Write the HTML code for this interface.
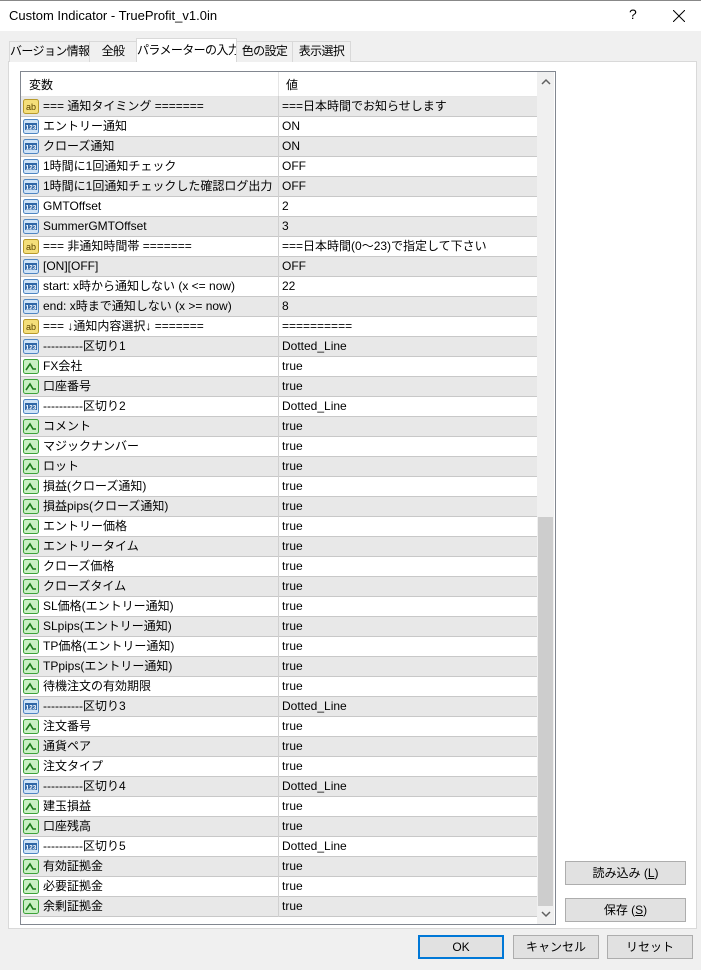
<!DOCTYPE html><html><head><meta charset="utf-8"><style>
*{margin:0;padding:0;box-sizing:border-box}
body{width:701px;height:970px;background:#f0f0f0;font-family:"Liberation Sans","Noto Sans CJK JP",sans-serif;font-size:12px;color:#000;position:relative;overflow:hidden}
.a{position:absolute}
#title{left:0;top:0;width:701px;height:31px;background:#fff;border-top:1px solid #888}
.tab{top:41px;height:21px;border:1px solid #d9d9d9;border-bottom:none;background:#f0f0f0;line-height:19px;text-align:center;font-size:12px;white-space:nowrap;letter-spacing:-0.6px;overflow:hidden}
#panel{left:8px;top:61px;width:689px;height:868px;background:#fff;border:1px solid #d9d9d9}
#list{left:20px;top:71px;width:536px;height:854px;border:1px solid #828790;background:#fff;overflow:hidden}
.row{position:absolute;left:0;width:516px;height:20px;border-bottom:1px solid #c8c8c8;line-height:19px}
.row.g{background:#e8e8e8}
.n{position:absolute;left:22px;top:0;white-space:nowrap}
.v{position:absolute;left:261px;top:0;white-space:nowrap}
.ic{position:absolute;left:2px;top:2px}
.btn{height:24px;border:1px solid #adadad;background:#e1e1e1;text-align:center;line-height:22px}
</style></head><body>
<div id="title" class="a"><span class="a" style="left:9px;top:7px;font-size:13px">Custom Indicator - TrueProfit_v1.0in</span>
<span class="a" style="left:629px;top:5px;font-size:14px">?</span>
<svg class="a" style="left:673px;top:9px" width="12" height="12"><path d="M0 0L12 12M12 0L0 12" stroke="#000" stroke-width="1"/></svg></div>
<div id="panel" class="a"></div>
<div class="a tab" style="left:9px;width:81px">バージョン情報</div>
<div class="a tab" style="left:89px;width:48px">全般</div>
<div class="a tab" style="left:136px;top:38px;height:24px;width:101px;background:#fff;border-color:#d9d9d9;line-height:22px">パラメーターの入力</div>
<div class="a tab" style="left:236px;width:57px">色の設定</div>
<div class="a tab" style="left:292px;width:59px">表示選択</div>
<div id="list" class="a">
<div class="a" style="left:0;top:0;width:516px;height:25px;background:#fff;border-bottom:1px solid #e5e5e5"><span class="a" style="left:8px;top:4px">変数</span><span class="a" style="left:257px;top:0;width:1px;height:24px;background:#e5e5e5"></span><span class="a" style="left:265px;top:4px">値</span></div>
<div class="a" style="left:257px;top:24px;width:1px;height:821px;background:#d0d0d0;z-index:2"></div>
<div id="rows"></div>
<div class="a" style="left:516px;top:0;width:17px;height:852px;background:#f0f0f0"></div>
<div class="a" style="left:517px;top:445px;width:15px;height:389px;background:#cdcdcd"></div>
<svg class="a" style="left:520px;top:6px" width="10" height="8"><path d="M1 6L5 2L9 6" stroke="#606060" stroke-width="1.5" fill="none"/></svg>
<svg class="a" style="left:520px;top:838px" width="10" height="8"><path d="M1 2L5 6L9 2" stroke="#606060" stroke-width="1.5" fill="none"/></svg>
</div>
<div class="a btn" style="left:565px;top:861px;width:121px">読み込み (<u>L</u>)</div>
<div class="a btn" style="left:565px;top:898px;width:121px">保存 (<u>S</u>)</div>
<div class="a btn" style="left:418px;top:935px;width:86px;border:2px solid #0078d7;line-height:20px">OK</div>
<div class="a btn" style="left:513px;top:935px;width:86px">キャンセル</div>
<div class="a btn" style="left:607px;top:935px;width:86px">リセット</div>
<script>
var d=[["s","=== 通知タイミング =======","===日本時間でお知らせします"],["n","エントリー通知","ON"],["n","クローズ通知","ON"],["n","1時間に1回通知チェック","OFF"],["n","1時間に1回通知チェックした確認ログ出力","OFF"],["n","GMTOffset","2"],["n","SummerGMTOffset","3"],["s","=== 非通知時間帯 =======","===日本時間(0〜23)で指定して下さい"],["n","[ON][OFF]","OFF"],["n","start: x時から通知しない (x <= now)","22"],["n","end: x時まで通知しない (x >= now)","8"],["s","=== ↓通知内容選択↓ =======","=========="],["n","----------区切り1","Dotted_Line"],["b","FX会社","true"],["b","口座番号","true"],["n","----------区切り2","Dotted_Line"],["b","コメント","true"],["b","マジックナンバー","true"],["b","ロット","true"],["b","損益(クローズ通知)","true"],["b","損益pips(クローズ通知)","true"],["b","エントリー価格","true"],["b","エントリータイム","true"],["b","クローズ価格","true"],["b","クローズタイム","true"],["b","SL価格(エントリー通知)","true"],["b","SLpips(エントリー通知)","true"],["b","TP価格(エントリー通知)","true"],["b","TPpips(エントリー通知)","true"],["b","待機注文の有効期限","true"],["n","----------区切り3","Dotted_Line"],["b","注文番号","true"],["b","通貨ペア","true"],["b","注文タイプ","true"],["n","----------区切り4","Dotted_Line"],["b","建玉損益","true"],["b","口座残高","true"],["n","----------区切り5","Dotted_Line"],["b","有効証拠金","true"],["b","必要証拠金","true"],["b","余剰証拠金","true"]];
var ic={s:'<svg class="ic" width="17" height="16"><rect x="0.5" y="0.5" width="15" height="14" rx="2" fill="#f5df7a" stroke="#b89b2c"/><text x="3" y="11" font-size="9" font-family="Liberation Sans" fill="#5a4500">ab</text></svg>',
n:'<svg class="ic" width="17" height="16"><rect x="0.5" y="0.5" width="15" height="14" rx="2" fill="#cfe3f7" stroke="#4f86c2"/><rect x="2" y="4" width="12" height="7" fill="#2f67a8"/><text x="2.5" y="10.5" font-size="6.5" font-weight="bold" font-family="Liberation Sans" fill="#fff">123</text></svg>',
b:'<svg class="ic" width="17" height="16"><rect x="0.5" y="0.5" width="15" height="14" rx="2" fill="#c9f0c3" stroke="#3da23a"/><path d="M3 11L7 5L10 10L13 10" stroke="#1c7a1c" stroke-width="1.6" fill="none"/></svg>'};
var h='';d.forEach(function(r,i){h+='<div class="row'+(i%2==0?' g':'')+'" style="top:'+(25+i*20)+'px">'+ic[r[0]]+'<span class="n">'+r[1].replace(/</g,'&lt;').replace(/>/g,'&gt;')+'</span><span class="v">'+r[2]+'</span></div>'});
document.getElementById('rows').innerHTML=h;
</script>
</body></html>
